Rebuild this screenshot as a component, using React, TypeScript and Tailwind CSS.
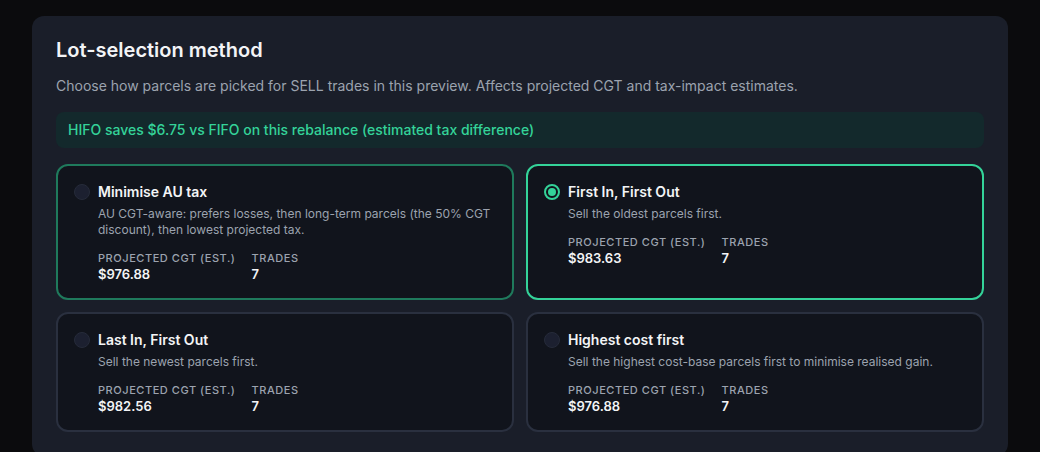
type Method = {
  id: string;
  title: string;
  description: string;
  cgt: string;
  trades: number;
};

const methods: Method[] = [
  {
    id: "au-tax",
    title: "Minimise AU tax",
    description:
      "AU CGT-aware: prefers losses, then long-term parcels (the 50% CGT discount), then lowest projected tax.",
    cgt: "$976.88",
    trades: 7,
  },
  {
    id: "fifo",
    title: "First In, First Out",
    description: "Sell the oldest parcels first.",
    cgt: "$983.63",
    trades: 7,
  },
  {
    id: "lifo",
    title: "Last In, First Out",
    description: "Sell the newest parcels first.",
    cgt: "$982.56",
    trades: 7,
  },
  {
    id: "hifo",
    title: "Highest cost first",
    description: "Sell the highest cost-base parcels first to minimise realised gain.",
    cgt: "$976.88",
    trades: 7,
  },
];

const selected = "fifo";
const recommended = "au-tax";

function Radio({ checked }: { checked: boolean }) {
  if (checked) {
    return (
      <span className="mt-0.5 flex h-4 w-4 shrink-0 items-center justify-center rounded-full border-2 border-[#34d399]">
        <span className="h-2 w-2 rounded-full bg-[#34d399]" />
      </span>
    );
  }
  return <span className="mt-0.5 h-4 w-4 shrink-0 rounded-full border border-[#262b3a] bg-[#1c2030]" />;
}

function MethodCard({ method }: { method: Method }) {
  const isSelected = method.id === selected;
  const border = isSelected
    ? "border-[#34d399]"
    : method.id === recommended
      ? "border-[#1f7a5c]"
      : "border-[#2a303f]";

  return (
    <label className={`flex gap-2 rounded-xl border-2 bg-[#11141c] p-4 ${border}`}>
      <Radio checked={isSelected} />
      <div className="flex flex-col">
        <div className="text-sm leading-5 font-semibold text-[#f3f4f6]">{method.title}</div>
        <p className="mt-1 text-xs leading-4 text-[#9ca3af]">{method.description}</p>
        <div className="mt-3 flex gap-4">
          <div>
            <div className="text-[11px] leading-4 font-medium tracking-wider text-[#9ca3af] uppercase">
              Projected CGT (est.)
            </div>
            <div className="text-[13px] leading-4 font-semibold text-[#f3f4f6]">{method.cgt}</div>
          </div>
          <div>
            <div className="text-[11px] leading-4 font-medium tracking-wider text-[#9ca3af] uppercase">Trades</div>
            <div className="text-[13px] leading-4 font-semibold text-[#f3f4f6]">{method.trades}</div>
          </div>
        </div>
      </div>
    </label>
  );
}

export default function App() {
  return (
    <div className="min-h-screen bg-[#0b0b0d] px-8 pt-4 font-['Inter',sans-serif]">
      <section className="rounded-xl bg-[#1a1e29] px-6 pt-5 pb-6">
        <h2 className="text-xl leading-7 font-semibold text-[#f3f4f6]">Lot-selection method</h2>
        <p className="mt-3 text-sm leading-5 text-[#9ca3af]">
          Choose how parcels are picked for SELL trades in this preview. Affects projected CGT and tax-impact
          estimates.
        </p>
        <div className="mt-4 rounded-lg bg-[#13292c] px-3 py-2 text-sm leading-5 font-medium text-[#34d399]">
          HIFO saves $6.75 vs FIFO on this rebalance (estimated tax difference)
        </div>
        <div className="mt-4 grid grid-cols-2 gap-3">
          {methods.map((m) => (
            <MethodCard key={m.id} method={m} />
          ))}
        </div>
      </section>
    </div>
  );
}
